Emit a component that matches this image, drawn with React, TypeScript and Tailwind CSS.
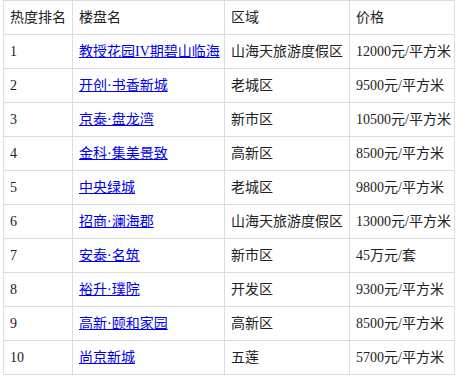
const rows = [
  { rank: 1, name: "教授花园IV期碧山临海", area: "山海天旅游度假区", price: "12000元/平方米" },
  { rank: 2, name: "开创·书香新城", area: "老城区", price: "9500元/平方米" },
  { rank: 3, name: "京泰·盘龙湾", area: "新市区", price: "10500元/平方米" },
  { rank: 4, name: "金科·集美景致", area: "高新区", price: "8500元/平方米" },
  { rank: 5, name: "中央绿城", area: "老城区", price: "9800元/平方米" },
  { rank: 6, name: "招商·澜海郡", area: "山海天旅游度假区", price: "13000元/平方米" },
  { rank: 7, name: "安泰·名筑", area: "新市区", price: "45万元/套" },
  { rank: 8, name: "裕升·璞院", area: "开发区", price: "9300元/平方米" },
  { rank: 9, name: "高新·颐和家园", area: "高新区", price: "8500元/平方米" },
  { rank: 10, name: "尚京新城", area: "五莲", price: "5700元/平方米" },
];

const cell = "border border-[#dddddd] px-[6px] h-[34px] align-middle text-left font-normal whitespace-nowrap";

export default function App() {
  return (
    <div className="bg-white w-[471px] h-[391px] pl-[3px] text-[14px] text-[#222222] [font-family:'Liberation_Serif','Noto_Sans_CJK_SC',serif]">
      <table className="border-collapse table-fixed w-[451px]">
        <colgroup>
          <col className="w-[69px]" />
          <col className="w-[152px]" />
          <col className="w-[125px]" />
          <col className="w-[105px]" />
        </colgroup>
        <thead>
          <tr>
            <th className={cell}>热度排名</th>
            <th className={cell}>楼盘名</th>
            <th className={cell}>区域</th>
            <th className={cell}>价格</th>
          </tr>
        </thead>
        <tbody>
          {rows.map((r) => (
            <tr key={r.rank}>
              <td className={cell}>{r.rank}</td>
              <td className={cell}>
                <a href="#" className="text-[#0000ee] underline">
                  {r.name}
                </a>
              </td>
              <td className={cell}>{r.area}</td>
              <td className={cell}>{r.price}</td>
            </tr>
          ))}
        </tbody>
      </table>
    </div>
  );
}
